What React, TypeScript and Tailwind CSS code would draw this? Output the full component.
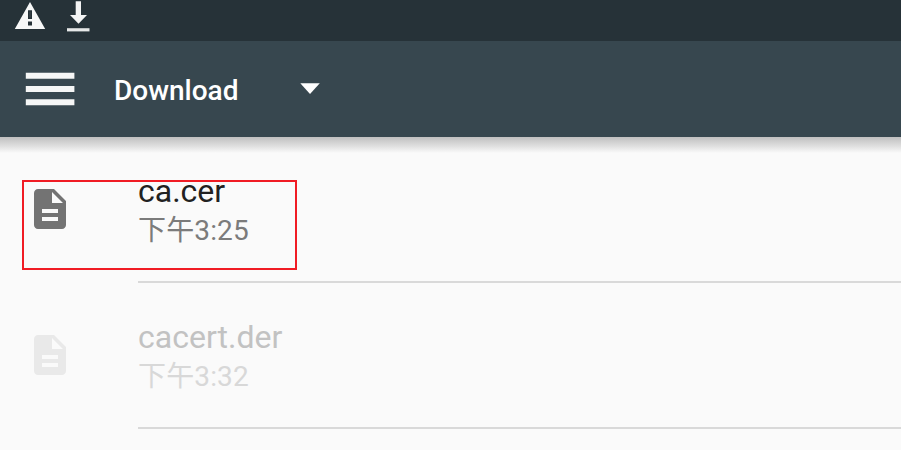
function FileIcon({ color }: { color: string }) {
  return (
    <svg viewBox="0 0 24 24" className="mb-0.5 ml-[26px] h-12 w-12 shrink-0" fill={color}>
      <path d="M14 2H6c-1.100 0-1.990.9-1.990 2L4 20c0 1.100.890 2 1.990 2H18c1.100 0 2-.9 2-2V8l-6-6zm2 16H8v-2h8v2zm0-4H8v-2h8v2zm-3-5V3.500L18.500 9H13z" />
    </svg>
  );
}

type RowProps = { name: string; time: string; nameClass: string; timeClass: string; icon: string };

function Row({ name, time, nameClass, timeClass, icon }: RowProps) {
  return (
    <div className="flex h-[146px] items-center">
      <FileIcon color={icon} />
      <div className="ml-16 flex h-full flex-1 flex-col border-b-2 border-[#d9d9d9] pt-[35px]">
        <div className={`h-[39px] text-[32px] leading-[39px] ${nameClass}`}>{name}</div>
        <div className={`h-[39px] text-[28px] leading-[39px] tracking-[0.15px] ${timeClass}`}>{time}</div>
      </div>
    </div>
  );
}

export default function App() {
  return (
    <div className="relative h-[450px] w-[901px] overflow-hidden bg-[#fafafa] font-[Roboto,'Noto_Sans_CJK_SC',sans-serif]">
      <div className="flex h-[41px] bg-[#263238] pl-[14px]">
        <svg viewBox="0 0 32 32" className="h-8 w-8" fill="#f7f8f8">
          <path fillRule="evenodd" d="M16 2 .8 29h30.400L16 2zm-2 8.300h4v8.700h-4zm0 11.200h4v4h-4z" />
          <path d="M15.500 11.500h1v6h-1z" opacity=".15" />
        </svg>
        <svg viewBox="0 0 32 32" className="ml-4 h-8 w-8" fill="#f3f4f4">
          <path d="M13.700 1.300h5.300V15h6l-8.500 8.700L8 15h5.700z" />
          <path d="M5 28.200h22.500v3.200H5z" fill="#e6e8e8" />
        </svg>
      </div>
      <div className="flex h-24 items-center bg-[#37474f] text-white">
        <svg viewBox="0 0 50 34" className="ml-[25px] h-[34px] w-[50px]" fill="#f5f6f6">
          <path d="M.8.700h48.600v6H.8zM.8 14h48.600v6H.8zM.8 27.300h48.600v6H.8z" />
        </svg>
        <div className="ml-[39px] pt-1 text-[28px] font-medium">Download</div>
        <svg viewBox="0 0 20 12" className="ml-[62px] h-3 w-5" fill="white">
          <path d="M.3.300h19.500L10 11z" />
        </svg>
      </div>
      <div className="h-4 bg-linear-to-b from-[#c0c0c0] via-[#dbdbdb] to-[#fafafa]" />
      <div className="-mt-4">
        <Row name="ca.cer" time="下午3:25" icon="#737373" nameClass="text-[#212121]" timeClass="text-[#7b7b7b]" />
        <Row name="cacert.der" time="下午3:32" icon="#e9e9e9" nameClass="text-[#c2c2c2]" timeClass="text-[#d8d8d8]" />
      </div>
      <div className="absolute left-[22px] top-[180px] h-[90px] w-[275px] border-2 border-[#f01c24]" />
    </div>
  );
}
